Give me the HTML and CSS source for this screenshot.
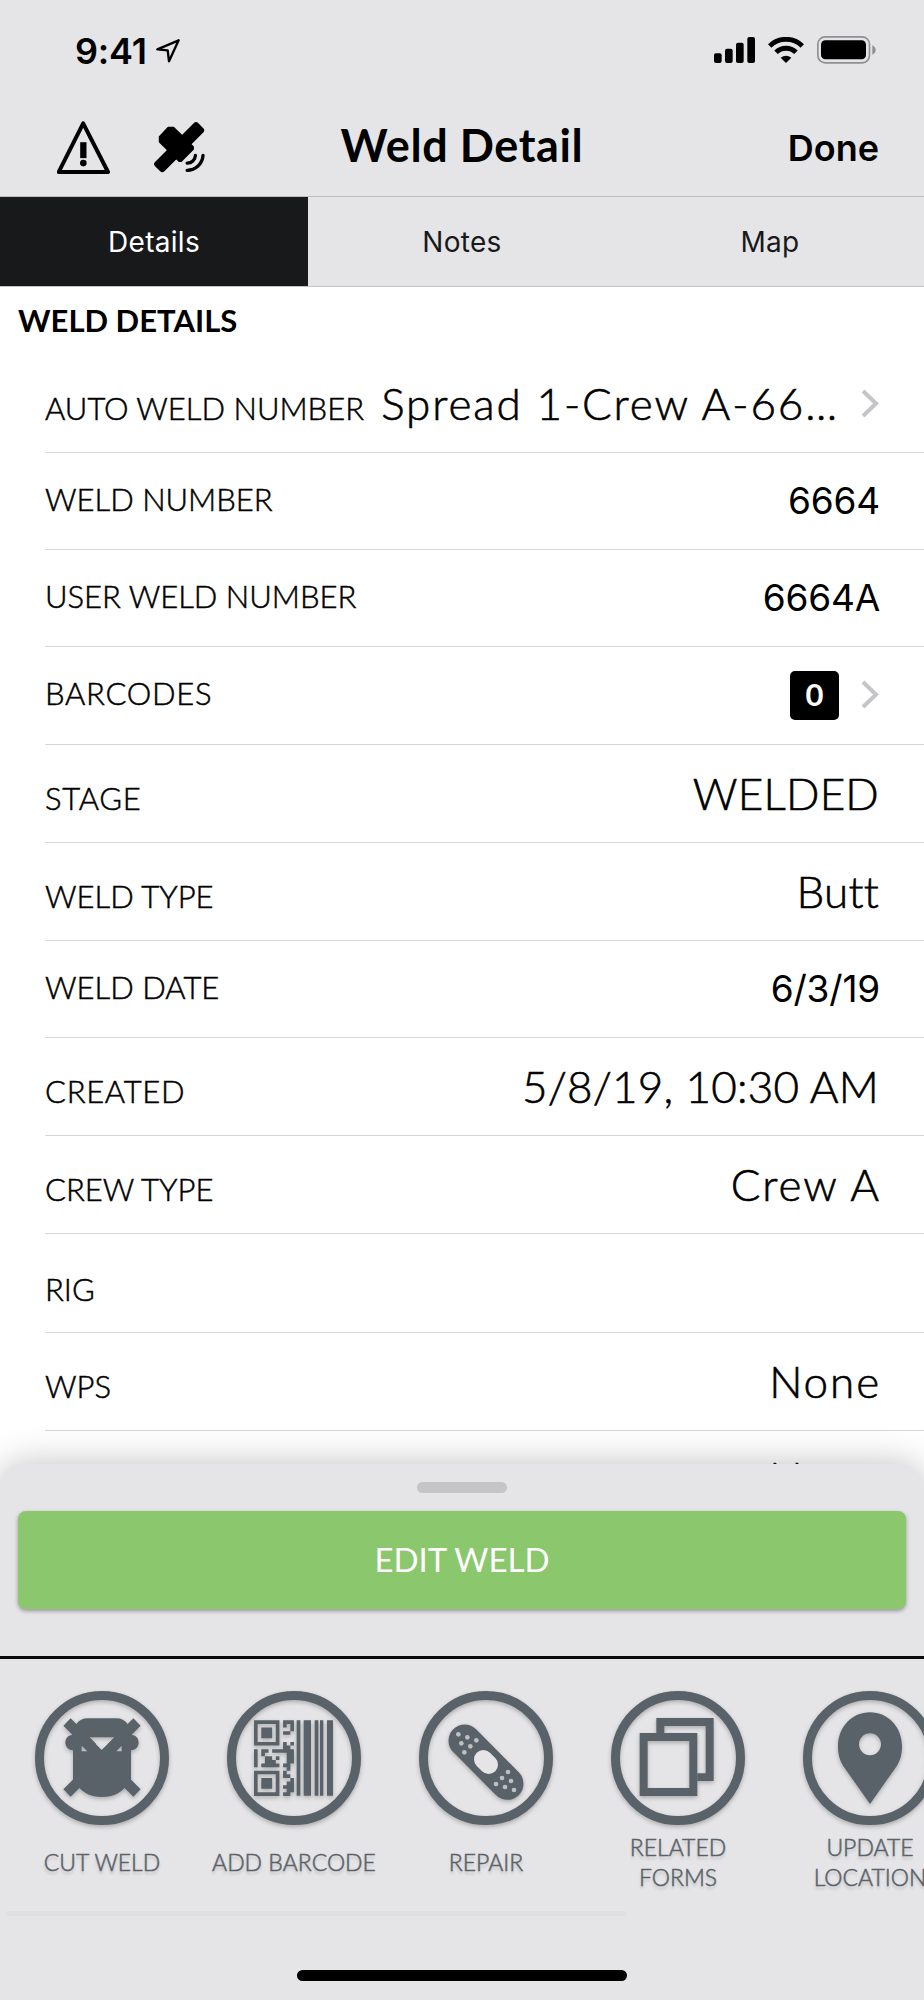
FILE: index.html
```
<!DOCTYPE html>
<html lang="en">
<head>
  <meta charset="UTF-8" />
  <title>Weld Detail</title>
  <link rel="stylesheet" href="styles.css">
</head>
<body>
  <div class="screen">
    <div class="status-bar">
      <span class="time">9:41</span>
      <svg class="location-arrow" width="24" height="24" viewBox="0 0 72 72"><path d="M68 4L39 67L35 34L4 31Z" fill="none" stroke="#000" stroke-width="7" stroke-linejoin="round"/></svg>
      <div class="status-icons">
        <svg width="41" height="26" viewBox="0 0 123 78">
          <rect x="0" y="49" width="23" height="29" rx="6"/>
          <rect x="33" y="35" width="23" height="43" rx="6"/>
          <rect x="66" y="17" width="23" height="61" rx="6"/>
          <rect x="100" y="0" width="23" height="78" rx="6"/>
        </svg>
        <svg width="36" height="26" viewBox="0 0 108 78">
          <path d="M5 27A70 70 0 0 1 103 27" fill="none" stroke="#000" stroke-width="15"/>
          <path d="M24 46A43 43 0 0 1 84 46" fill="none" stroke="#000" stroke-width="15"/>
          <path d="M38 62Q54 51 70 62L54 78Z"/>
        </svg>
        <svg width="59" height="28" viewBox="0 0 177 84">
          <rect x="2.5" y="2.5" width="155" height="78" rx="22" fill="none" stroke="#909092" stroke-width="5"/>
          <rect x="12" y="13" width="135" height="57" rx="13"/>
          <path d="M166 28Q176 33 176 42Q176 51 166 56Z" fill="#909092"/>
        </svg>
      </div>
    </div>

    <div class="nav">
      <div class="nav-icons">
        <svg width="53" height="53" viewBox="0 0 160 160">
          <path d="M79 7L154 154H5Z" fill="none" stroke="#000" stroke-width="12" stroke-linejoin="round"/>
          <rect x="70" y="64" width="19" height="48"/>
          <circle cx="79.500" cy="127" r="10"/>
        </svg>
        <svg width="53" height="53" viewBox="0 0 160 160">
          <rect x="-92" y="-20" width="184" height="40" rx="9" transform="translate(79 79) rotate(-45)"/>
          <path d="M46 20H62L86 43L121 78V85L85 121H79L20 63V48Z" stroke="#000" stroke-width="5" stroke-linejoin="round"/>
          <path d="M128 104A24 24 0 0 1 103 127M151 104A48 48 0 0 1 103 149" fill="none" stroke="#000" stroke-width="10" stroke-linecap="round"/>
        </svg>
      </div>
      <h1>Weld Detail</h1>
      <span class="done">Done</span>
    </div>

    <div class="tabs">
      <div class="tab active">Details</div>
      <div class="tab">Notes</div>
      <div class="tab">Map</div>
    </div>

    <div class="list">
      <h2>WELD DETAILS</h2>
      <div class="row first">
        <span class="label">AUTO WELD NUMBER</span>
        <span class="value">Spread 1-Crew A-66…</span>
        <svg class="chevron" width="20" height="29" viewBox="0 0 20 29"><path d="M3 2L16 14.500L3 27"/></svg>
      </div>
      <div class="row input">
        <span class="label">WELD NUMBER</span>
        <span class="value">6664</span>
      </div>
      <div class="row input">
        <span class="label">USER WELD NUMBER</span>
        <span class="value">6664A</span>
      </div>
      <div class="row barcodes">
        <span class="label wide">BARCODES</span>
        <span class="count">0</span>
        <svg class="chevron" width="20" height="29" viewBox="0 0 20 29"><path d="M3 2L16 14.500L3 27"/></svg>
      </div>
      <div class="row">
        <span class="label wide">STAGE</span>
        <span class="value tight">WELDED</span>
      </div>
      <div class="row">
        <span class="label">WELD TYPE</span>
        <span class="value tight">Butt</span>
      </div>
      <div class="row input">
        <span class="label">WELD DATE</span>
        <span class="value">6/3/19</span>
      </div>
      <div class="row">
        <span class="label wide">CREATED</span>
        <span class="value tight">5/8/19, 10:30 AM</span>
      </div>
      <div class="row">
        <span class="label">CREW TYPE</span>
        <span class="value">Crew A</span>
      </div>
      <div class="row rig">
        <span class="label">RIG</span>
      </div>
      <div class="row">
        <span class="label">WPS</span>
        <span class="value">None</span>
      </div>
      <div class="row next">
        <span class="value">None</span>
      </div>
    </div>

    <div class="sheet">
      <div class="handle"></div>
      <div class="edit-button">EDIT WELD</div>
      <div class="actions">
        <div class="action">
          <svg viewBox="0 0 402 402">
            <circle class="ring" cx="201" cy="201" r="187.500"/>
            <path d="M96 93L172 169M306 93L230 169M96 306L150 252M306 306L252 252" fill="none" stroke="#5a6269" stroke-width="31"/>
            <path fill-rule="evenodd" d="M124 99Q136 82 158 82H244Q266 82 278 99L291 132C318 134 318 177 288 178V266Q258 318 201 318Q144 318 114 266V178C84 177 84 134 111 132ZM162 139L200 177L239 139ZM140 164V181H157ZM260 164L244 181H260Z"/>
          </svg>
          <p>CUT WELD</p>
        </div>
        <div class="action">
          <svg viewBox="0 0 402 402">
            <circle class="ring" cx="201" cy="201" r="187.500"/>
            <!-- QR half, one unit per module -->
            <g transform="translate(81 88) scale(10.900 10.800)">
              <path fill-rule="evenodd" d="M0 0H7V7H0ZM1 1V6H6V1ZM2 2H5V5H2Z"/>
              <path fill-rule="evenodd" d="M0 14H7V21H0ZM1 15V20H6V15ZM2 16H5V19H2Z"/>
              <path d="M8 0H11V3H10V1H9V2H8ZM8 3H10V4H8ZM8 6H9V7H10V8H11V9H11V12H10V13H8V12H9V9H5V8H8ZM10 6H11V7H10ZM0 8H1V13H0ZM2 8H4V9H3V10H2ZM3 10H5V11H6V10H7V11H6V12H7V13H2V12H3ZM9 9H10V10H9ZM9 13H10V14H9V15H10V16H8V14H9ZM10 16H11V20H10V21H8V20H9V19H8V18H9V17H10Z"/>
            </g>
            <path d="M209 88H220V314H209ZM230 88H252V314H230ZM263 88H274V314H263ZM279 88H289V314H279ZM300 88H318V314H300Z"/>
          </svg>
          <p>ADD BARCODE</p>
        </div>
        <div class="action">
          <svg viewBox="0 0 402 402">
            <circle class="ring" cx="201" cy="201" r="187.500"/>
            <path d="M137 149L265 278" stroke="#5a6269" stroke-width="97" stroke-linecap="round"/>
            <path d="M193 205L209 221" stroke="#e5e5e7" stroke-width="56" stroke-linecap="round"/>
            <g fill="#bfc0c3">
              <circle cx="118" cy="130" r="7"/><circle cx="145" cy="139" r="7"/><circle cx="172" cy="148" r="7"/>
              <circle cx="127" cy="157" r="7"/><circle cx="154" cy="166" r="7"/><circle cx="136" cy="184" r="7"/>
              <circle cx="267" cy="243" r="7"/><circle cx="249" cy="261" r="7"/><circle cx="276" cy="270" r="7"/>
              <circle cx="231" cy="279" r="7"/><circle cx="258" cy="288" r="7"/><circle cx="285" cy="297" r="7"/>
            </g>
          </svg>
          <p>REPAIR</p>
        </div>
        <div class="action">
          <svg viewBox="0 0 402 402">
            <circle class="ring" cx="201" cy="201" r="187.500"/>
            <path fill-rule="evenodd" d="M86 126H259V315H86ZM110 150V291H235V150Z"/>
            <path d="M136 126V81H308V270H259V247H284V105H160V126Z"/>
          </svg>
          <p>RELATED<br>FORMS</p>
        </div>
        <div class="action">
          <svg viewBox="0 0 402 402">
            <circle class="ring" cx="201" cy="201" r="187.500"/>
            <path fill-rule="evenodd" d="M201 339L120 224C109 206 105 188 105 166C105 108 147 64 201 64S297 108 297 166C297 188 293 206 282 224ZM201 127A33 33 0 1 0 201 193A33 33 0 1 0 201 127Z"/>
          </svg>
          <p>UPDATE<br>LOCATION</p>
        </div>
      </div>
      <div class="scrollbar"></div>
      <div class="home-indicator"></div>
    </div>
  </div>
</body>
</html>
```
FILE: styles.css
```
* {
  box-sizing: border-box;
}

body {
  margin: 0;
  background: #fff;
  color: #000;
  font-family: Lato, sans-serif;
}

.screen {
  width: 924px;
  height: 2000px;
  overflow: hidden;
  display: flex;
  flex-direction: column;
}

.status-bar {
  height: 100px;
  flex: none;
  padding: 36px 48px 0 75px;
  display: flex;
  align-items: flex-start;
  background: #e5e5e7;
}

.time {
  font-family: Inter, sans-serif;
  font-weight: 600;
  font-size: 36px;
  line-height: 30px;
  letter-spacing: -0.2px;
}

.location-arrow {
  margin: 3px 0 0 9px;
}

.status-icons {
  margin-left: auto;
  display: flex;
  gap: 13px;
  align-items: center;
}

.nav {
  height: 97px;
  flex: none;
  padding: 0 45px;
  display: grid;
  grid-template-columns: 1fr auto 1fr;
  align-items: start;
  background: #e5e5e7;
  border-bottom: 1px solid #bcbcbe;
}

.nav-icons {
  display: flex;
  gap: 43px;
  padding: 21px 0 0 12px;
}

.nav h1 {
  margin: 0;
  padding-top: 18px;
  font-size: 45px;
  font-weight: 700;
  line-height: 54px;
  letter-spacing: 0.6px;
}

.done {
  padding-top: 26px;
  text-align: right;
  font-family: Inter, sans-serif;
  font-weight: 600;
  font-size: 36px;
  line-height: 44px;
}

.tabs {
  height: 90px;
  flex: none;
  display: flex;
  background: #e5e5e7;
  border-bottom: 1px solid #c4c4c6;
}

.tab {
  flex: 1;
  text-align: center;
  font-family: Inter, sans-serif;
  font-size: 28px;
  line-height: 90px;
  letter-spacing: 0.3px;
  color: #18191b;
}

.tab.active {
  background: #18191b;
  color: #fff;
}

.list {
  height: 1177px;
  flex: none;
  overflow: hidden;
}

.list h2 {
  margin: 0;
  padding: 13px 18px 0;
  height: 68px;
  font-size: 31px;
  font-weight: 700;
  line-height: 40px;
}

.row {
  height: 98px;
  margin-left: 45px;
  padding: 22px 45px 0 0;
  display: flex;
  justify-content: space-between;
  align-items: baseline;
  border-bottom: 1px solid #d6d6d8;
}

.label {
  font-size: 31px;
  font-weight: 300;
  line-height: 40px;
  white-space: nowrap;
  -webkit-text-stroke: 0.5px #000;
}

.label.wide {
  letter-spacing: 0.7px;
}

.value {
  margin: 0 -2px 0 auto;
  font-size: 44px;
  font-weight: 300;
  line-height: 52px;
  letter-spacing: 1.9px;
  white-space: nowrap;
  -webkit-text-stroke: 0.6px #000;
}

.value.tight {
  margin-right: 0;
  letter-spacing: 0.2px;
}

.first .value {
  margin-right: 0;
}

.row.input {
  height: 97px;
  padding-top: 26px;
  align-items: flex-start;
}

.input .value {
  margin-right: -1px;
  font-family: Inter, sans-serif;
  font-size: 37px;
  font-weight: 400;
  line-height: 44px;
  letter-spacing: -0.2px;
  -webkit-text-stroke: 0;
}

.row.barcodes {
  padding-top: 24px;
  align-items: flex-start;
}

.barcodes .label {
  margin-top: 2px;
}

.count {
  width: 49px;
  height: 49px;
  margin-left: auto;
  border-radius: 5px;
  background: #000;
  color: #fff;
  font-size: 31px;
  font-weight: 700;
  line-height: 47px;
  text-align: center;
}

.chevron {
  margin: 0 -1px 0 21px;
  fill: none;
  stroke: #c5c5c9;
  stroke-width: 4;
}

.first .chevron {
  align-self: flex-start;
  margin-top: 12px;
}

.barcodes .chevron {
  margin-top: 9px;
}

.row.rig {
  height: 99px;
  padding-top: 35px;
}

.row.next {
  padding-top: 20px;
}

.sheet {
  flex: 1;
  position: relative;
  padding-top: 18px;
  background: #e5e5e7;
  border-radius: 24px 24px 0 0;
  box-shadow: 0 0 36px rgba(0, 0, 0, 0.25);
}

.handle {
  width: 90px;
  height: 11px;
  margin: 0 auto 18px;
  border-radius: 6px;
  background: #c5c5c7;
}

.edit-button {
  height: 98px;
  margin: 0 18px 47px;
  border-radius: 8px;
  background: #8bc76d;
  box-shadow: 0 2px 4px rgba(0, 0, 0, 0.35);
  color: #fff;
  font-size: 33px;
  line-height: 97px;
  text-align: center;
}

.actions {
  height: 255px;
  padding: 32px 0 0 6px;
  display: flex;
  overflow: hidden;
  border-top: 3px solid #0c0c0d;
}

.action {
  width: 192px;
  flex: none;
  color: #5a6269;
  text-align: center;
}

.action svg {
  display: block;
  width: 134px;
  height: 134px;
  margin: 0 auto;
  fill: #5a6269;
  overflow: visible;
  filter: drop-shadow(0 2px 2px rgba(0, 0, 0, 0.25));
}

.action .ring {
  fill: none;
  stroke: #5a6269;
  stroke-width: 27;
}

.action p {
  height: 60px;
  margin: 7px 0 0;
  display: flex;
  align-items: center;
  justify-content: center;
  font-size: 23px;
  font-weight: 300;
  line-height: 30px;
  -webkit-text-stroke: 0.5px #5a6269;
  text-shadow: 0 3px 3px rgba(0, 0, 0, 0.2);
}

.scrollbar {
  width: 619px;
  height: 5px;
  margin-left: 7px;
  border-radius: 3px;
  background: #dfdfe1;
}

.home-indicator {
  width: 330px;
  height: 11px;
  margin: 54px auto 0;
  border-radius: 6px;
  background: #000;
}
```
